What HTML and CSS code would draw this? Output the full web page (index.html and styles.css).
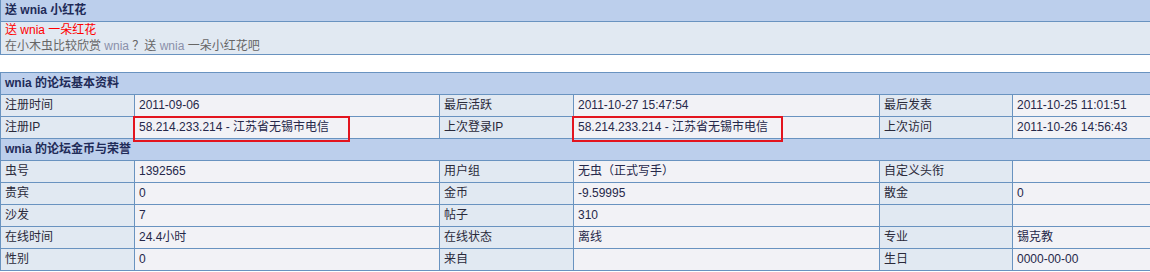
FILE: index.html
```html
<!DOCTYPE html>
<html lang="zh-CN">
<head>
<meta charset="utf-8">
<title>wnia 的论坛资料</title>
<link rel="stylesheet" href="styles.css">
</head>
<body>
<div class="page">
  <table class="box flower">
    <tr><th class="head">送 wnia 小红花</th></tr>
    <tr><td class="flower-body">
      <div class="red">送 wnia 一朵红花</div>
      <div class="gray">在小木虫比较欣赏 <span class="name">wnia</span> ？送 <span class="name">wnia</span> 一朵小红花吧</div>
    </td></tr>
  </table>

  <div class="profile-wrap">
    <table class="box profile">
      <colgroup>
        <col class="c-l1"><col class="c-v1"><col class="c-l2"><col class="c-v2"><col class="c-l3"><col class="c-v3">
      </colgroup>
      <tr><th class="head" colspan="6">wnia 的论坛基本资料</th></tr>
      <tr>
        <td class="lab">注册时间</td><td class="val">2011-09-06</td>
        <td class="lab">最后活跃</td><td class="val">2011-10-27 15:47:54</td>
        <td class="lab">最后发表</td><td class="val">2011-10-25 11:01:51</td>
      </tr>
      <tr>
        <td class="lab">注册IP</td><td class="val">58.214.233.214 - 江苏省无锡市电信</td>
        <td class="lab">上次登录IP</td><td class="val">58.214.233.214 - 江苏省无锡市电信</td>
        <td class="lab">上次访问</td><td class="val">2011-10-26 14:56:43</td>
      </tr>
      <tr><th class="head" colspan="6">wnia 的论坛金币与荣誉</th></tr>
      <tr>
        <td class="lab">虫号</td><td class="val">1392565</td>
        <td class="lab">用户组</td><td class="val">无虫（正式写手）</td>
        <td class="lab">自定义头衔</td><td class="val"></td>
      </tr>
      <tr>
        <td class="lab">贵宾</td><td class="val">0</td>
        <td class="lab">金币</td><td class="val">-9.59995</td>
        <td class="lab">散金</td><td class="val">0</td>
      </tr>
      <tr>
        <td class="lab">沙发</td><td class="val">7</td>
        <td class="lab">帖子</td><td class="val">310</td>
        <td class="lab"></td><td class="val"></td>
      </tr>
      <tr>
        <td class="lab">在线时间</td><td class="val">24.4小时</td>
        <td class="lab">在线状态</td><td class="val">离线</td>
        <td class="lab">专业</td><td class="val">锡克教</td>
      </tr>
      <tr>
        <td class="lab">性别</td><td class="val">0</td>
        <td class="lab">来自</td><td class="val"></td>
        <td class="lab">生日</td><td class="val">0000-00-00</td>
      </tr>
    </table>
    <div class="mark mark-1"></div>
    <div class="mark mark-2"></div>
  </div>
</div>
</body>
</html>
```
FILE: styles.css
```css
html, body {
  margin: 0;
  padding: 0;
  overflow: hidden;
  background: #ffffff;
}

body {
  font-family: "Liberation Sans", "Noto Sans CJK SC", sans-serif;
  font-size: 12px;
  color: #26284a;
}

.page {
  width: 1150px;
  overflow: hidden;
}

.box {
  border-collapse: collapse;
  table-layout: fixed;
  width: 1317px;
}

.box th,
.box td {
  border: 1px solid #6993c0;
  padding: 0 4px;
  text-align: left;
  vertical-align: middle;
  white-space: nowrap;
  overflow: hidden;
}

.flower {
  margin-top: -1px;
  margin-bottom: 17px;
}

.head {
  background: #bccfec;
  color: #1f2b58;
  font-weight: bold;
  height: 21px;
  line-height: 21px;
}

.flower-body {
  background: #e1e9f2;
  padding: 3px 4px 2px;
  line-height: 16px;
}

.red {
  color: #ff0000;
}

.gray {
  color: #666666;
}

.gray .name {
  color: #8a90aa;
}

.profile-wrap {
  position: relative;
}

.profile .head {
  height: 21px;
  line-height: 21px;
}

.profile td {
  height: 21px;
  line-height: 21px;
}

.lab {
  background: #e1e9f2;
  color: #2a2a3a;
}

.val {
  background: #f2f2f6;
}

.c-l1 { width: 134px; }
.c-v1 { width: 305px; }
.c-l2 { width: 134px; }
.c-v2 { width: 306px; }
.c-l3 { width: 133px; }
.c-v3 { width: 305px; }

.mark {
  position: absolute;
  top: 44px;
  height: 22px;
  border: 2px solid #e3141e;
}

.mark-1 {
  left: 133px;
  width: 213px;
}

.mark-2 {
  left: 572px;
  width: 207px;
}
```
